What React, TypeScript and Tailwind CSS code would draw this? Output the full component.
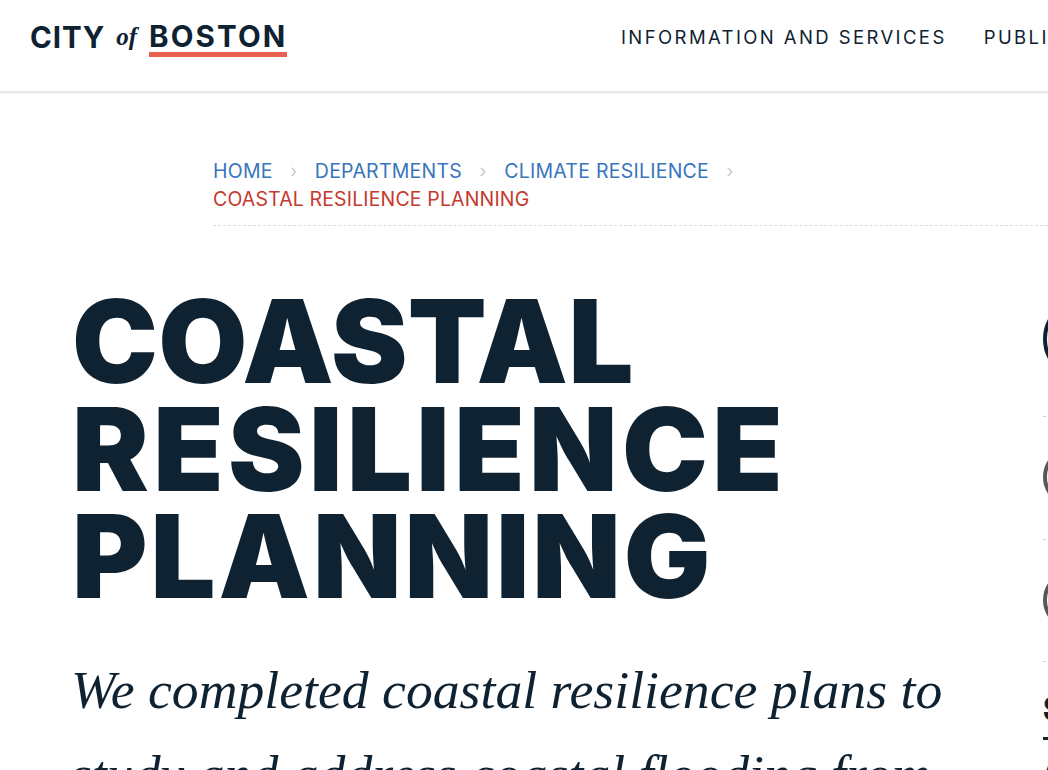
import React from "react";

const sans = "font-['Inter','Liberation_Sans',sans-serif]";

function Ring({ className }: { className: string }) {
  return <div className={`rounded-full border-solid bg-white ${className}`} />;
}

function Crumb({ label }: { label: string }) {
  return (
    <span className="inline-flex items-center">
      <a className="tracking-[0.25px] text-[#3875bd]">{label}</a>
      <span className="mx-[17.5px] text-[18px] leading-none text-[#c9c9c9]">›</span>
    </span>
  );
}

export default function App() {
  return (
    <div className={`h-[770px] w-[1048px] overflow-hidden bg-white text-[#0f2231] ${sans}`}>
      <header className="flex h-[91px] items-start justify-between overflow-hidden pl-[30px]">
        <div className="flex items-start pt-[20px] text-[#0f2231]">
          <span className="text-[29.5px] leading-[35px] font-bold tracking-[0.9px]">CITY</span>
          <span className="mt-[-1px] ml-[11px] font-['Liberation_Serif',serif] text-[25px] leading-[35px] font-semibold italic">of</span>
          <span className="ml-[12px] border-b-[5px] border-[#e8604f] text-[29.5px] leading-[32px] font-bold tracking-[2.15px]">BOSTON</span>
        </div>
        <nav className="flex w-[427px] shrink-0 gap-[37px] pt-[26px] text-[18.5px] leading-[22px] tracking-[2.4px] whitespace-nowrap text-[#0f2231]">
          <a>INFORMATION AND SERVICES</a>
          <a>PUBLIC NOTICES</a>
        </nav>
      </header>
      <div className="h-[3px] bg-gradient-to-b from-[#e2e2e2] to-[#f6f6f6]" />

      <div className="flex">
        <main className="w-[1043px] shrink-0 pl-[72px]">
          <div className="-mr-[5px] ml-[141px] mt-[63px] border-b border-dashed border-[#dcdcdc] pb-[12px] text-[19.5px] leading-[28px] tracking-[0.15px]">
            <div className="flex whitespace-nowrap">
              <Crumb label="HOME" />
              <Crumb label="DEPARTMENTS" />
              <Crumb label="CLIMATE RESILIENCE" />
            </div>
            <div className="text-[#c5392e]">COASTAL RESILIENCE PLANNING</div>
          </div>
          <h1 className="mt-[62px] text-[115px] leading-[107.5px] font-black whitespace-nowrap text-[#0f2231]">
            <span className="tracking-[0.4px]">COASTAL</span>
            <br />
            <span className="tracking-[4.4px]">RESILIENCE</span>
            <br />
            <span className="tracking-[3px]">PLANNING</span>
          </h1>
          <p className="mt-[37px] -ml-[1px] font-['Liberation_Serif',serif] text-[53.7px] leading-[84px] whitespace-nowrap text-[#0f2231] italic">
            We completed coastal resilience plans to
            <br />
            study and address coastal flooding from
          </p>
        </main>

        <aside className="w-[300px] shrink-0 whitespace-nowrap">
          <div className="mt-[203px] h-[120px] border-b border-dashed border-[#cfcfcf]">
            <Ring className="h-[84px] w-[84px] border-[4px] border-[#0f2231]" />
          </div>
          <div className="h-[123px] border-b border-dashed border-[#cfcfcf] pt-[30px]">
            <Ring className="h-[60px] w-[60px] border-[4px] border-[#58585b]" />
          </div>
          <div className="h-[122px] border-b border-dashed border-[#cfcfcf] pt-[30px]">
            <Ring className="h-[60px] w-[60px] border-[4px] border-[#58585b]" />
          </div>
          <h2 className="mt-[30px] border-b-[3px] border-[#0f2231] pb-[11px] text-[34px] leading-[34px] font-black text-[#0f2231]">
            STAY CONNECTED
          </h2>
          <p className="mt-[7px] text-[32px] leading-[40px] text-[#0f2231]">Action</p>
        </aside>
      </div>
    </div>
  );
}
